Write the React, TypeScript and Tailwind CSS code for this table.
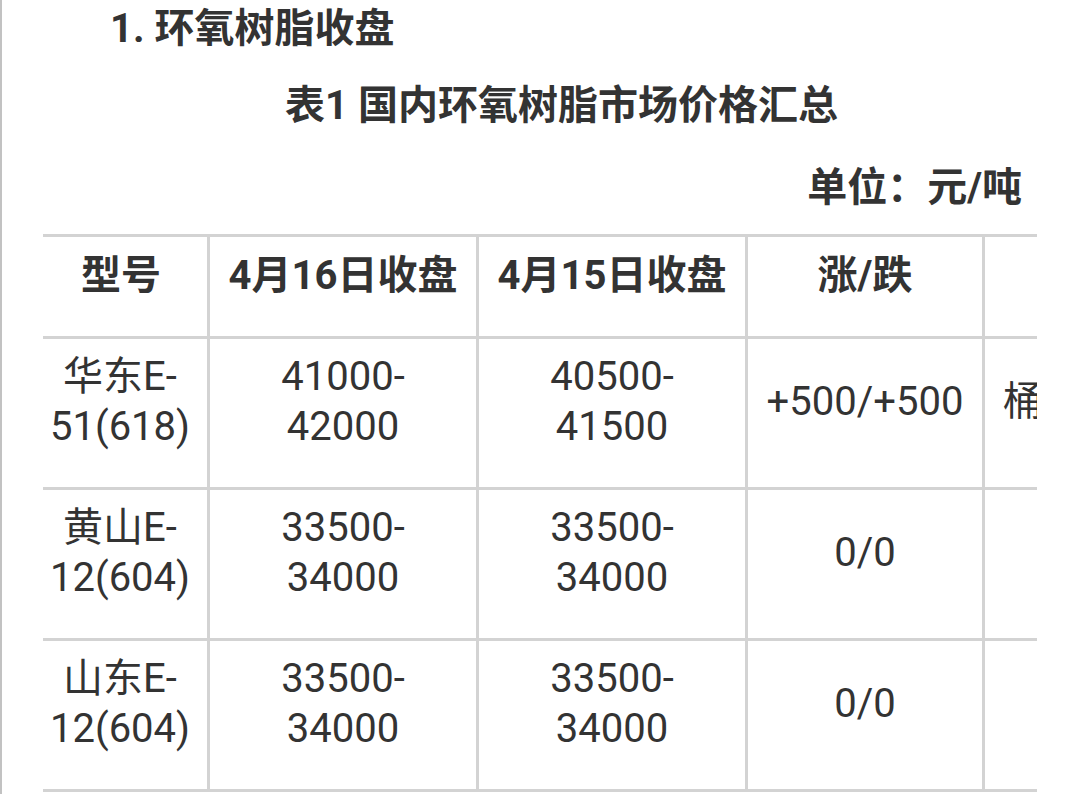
import React from "react";

const font = { fontFamily: '"Roboto", "Noto Sans CJK SC", sans-serif' };

type Row = { name: React.ReactNode; a: React.ReactNode; b: React.ReactNode; c: string; d: string };

const rows: Row[] = [
  { name: <>华东E-<br />51(618)</>, a: <>41000-<br />42000</>, b: <>40500-<br />41500</>, c: "+500/+500", d: "桶装" },
  { name: <>黄山E-<br />12(604)</>, a: <>33500-<br />34000</>, b: <>33500-<br />34000</>, c: "0/0", d: "" },
  { name: <>山东E-<br />12(604)</>, a: <>33500-<br />34000</>, b: <>33500-<br />34000</>, c: "0/0", d: "" },
];

export default function App() {
  const cell = "border-r-[3px] border-b-[3px] border-[#d3d3d3] align-middle text-center pb-[22px] p-0";
  return (
    <div
      className="w-[1080px] h-[794px] overflow-hidden bg-white border-l-2 border-[#c2c2c2] text-[#333333] text-[40px] leading-[48px]"
      style={font}
    >
      <div className="pl-[108px] pt-[5px] font-bold">1. 环氧树脂收盘</div>
      <div className="pl-[41px] mt-[29px] text-center font-bold">表1 国内环氧树脂市场价格汇总</div>
      <div className="mt-[34px] pr-[58px] text-right font-bold">单位：元/吨</div>
      <div className="ml-[41px] mt-[22px] w-[994px] overflow-hidden leading-[50px]">
        <table className="table-fixed border-separate border-spacing-0 border-t-[3px] border-[#d3d3d3] w-[1157px]">
          <colgroup>
            <col className="w-[167px]" />
            <col className="w-[269px]" />
            <col className="w-[269px]" />
            <col className="w-[237px]" />
            <col className="w-[215px]" />
          </colgroup>
          <thead>
            <tr className="h-[102px] font-bold">
              <td className={cell + " pr-[8px]"}>型号</td>
              <td className={cell + " whitespace-nowrap"}>4月16日收盘</td>
              <td className={cell + " whitespace-nowrap"}>4月15日收盘</td>
              <td className={cell}>涨/跌</td>
              <td className={cell}></td>
            </tr>
          </thead>
          <tbody>
            {rows.map((r, i) => (
              <tr key={i} className="h-[151px]">
                <td className={cell + " pr-[10px]"}>{r.name}</td>
                <td className={cell}>{r.a}</td>
                <td className={cell}>{r.b}</td>
                <td className={cell + " whitespace-nowrap"}>{r.c}</td>
                <td className={cell + " !text-left pl-[18px] whitespace-nowrap"}>{r.d}</td>
              </tr>
            ))}
          </tbody>
        </table>
      </div>
    </div>
  );
}
